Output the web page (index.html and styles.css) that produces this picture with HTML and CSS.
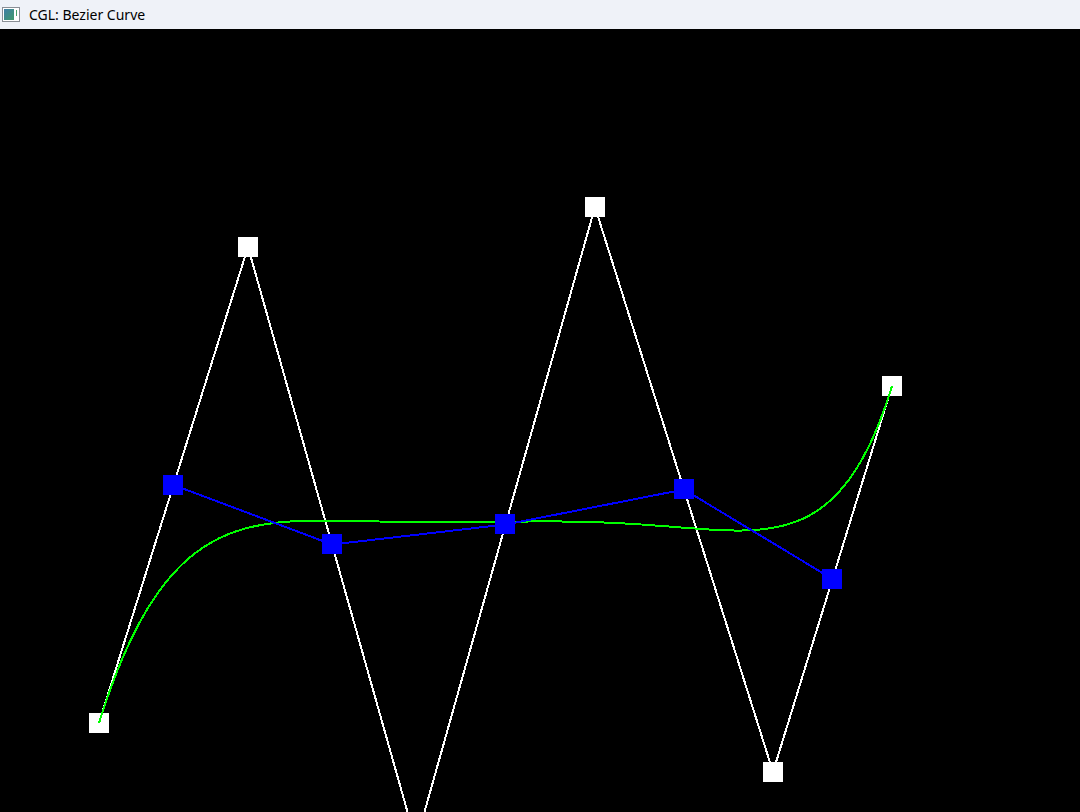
FILE: index.html
```html
<!DOCTYPE html>
<html lang="en">
<head>
    <meta charset="UTF-8">
    <title>CGL: Bezier Curve</title>
    <link rel="stylesheet" href="styles.css">
</head>
<body>
    <div class="titlebar">
        <svg class="app-icon" width="18" height="15" viewBox="0 0 18 15">
            <defs>
                <linearGradient id="iconFill" x1="0" y1="0" x2="1" y2="1">
                    <stop offset="0" stop-color="#3f7fa8"/>
                    <stop offset="1" stop-color="#3f9a6a"/>
                </linearGradient>
            </defs>
            <rect x="0.5" y="0.5" width="17" height="14" fill="#fff" stroke="#8a8f96"/>
            <rect x="2" y="2" width="10" height="11" fill="url(#iconFill)"/>
            <rect x="14" y="3" width="1" height="6" fill="#4aa36a"/>
        </svg>
        <span class="title">CGL: Bezier Curve</span>
    </div>
    <svg id="view" class="view" width="1080" height="783" viewBox="0 29 1080 783"></svg>
    <script src="script.js"></script>
</body>
</html>
```

FILE: styles.css
```css
html, body { margin: 0; padding: 0; background: #000; overflow: hidden; }
.titlebar {
    height: 29px;
    background: #eff2f8;
    display: flex;
    align-items: center;
    padding-left: 2px;
    gap: 9px;
    font-family: "Noto Sans", "Open Sans", sans-serif;
    font-size: 14px;
    color: #000;
}
.app-icon { display: block; margin-top: -1px; }
.title { line-height: 1; }
.view { display: block; background: #000; }
.view line, .view polyline { shape-rendering: crispEdges; fill: none; stroke-width: 2; }
.view rect { shape-rendering: crispEdges; }
.poly { stroke: #fff; }
.mid { stroke: #0000ff; }
.curve { stroke: #00ff00; }
.pt-white { fill: #fff; }
.pt-blue { fill: #0000ff; }
```

FILE: script.js
```js
// control points, screen coordinates
const pts = [[99, 723], [248, 247], [416, 842], [595, 207], [773, 772], [892, 386]];
const view = document.getElementById("view");
const NS = "http://www.w3.org/2000/svg";

function el(name, attrs) {
    const e = document.createElementNS(NS, name);
    for (const k in attrs) e.setAttribute(k, attrs[k]);
    view.appendChild(e);
    return e;
}

// 20x20 point marker, snapped to whole pixels
function square(p, cls) {
    el("rect", { x: Math.floor(p[0]) - 10, y: Math.floor(p[1]) - 10, width: 20, height: 20, class: cls });
}

// midpoints between neighbouring control points
const mids = [];
for (let i = 0; i < pts.length - 1; i++) {
    mids.push([(pts[i][0] + pts[i + 1][0]) / 2, (pts[i][1] + pts[i + 1][1]) / 2]);
}

// de Casteljau
function bezier(t) {
    let p = pts.map(q => q.slice());
    for (let k = p.length - 1; k > 0; k--) {
        for (let i = 0; i < k; i++) {
            p[i] = [p[i][0] * (1 - t) + p[i + 1][0] * t, p[i][1] * (1 - t) + p[i + 1][1] * t];
        }
    }
    return p[0];
}

el("polyline", { points: pts.map(p => p.join(",")).join(" "), class: "poly" });
pts.forEach(p => square(p, "pt-white"));

const curve = [];
for (let i = 0; i <= 200; i++) curve.push(bezier(i / 200).map(v => v.toFixed(1)).join(","));
el("polyline", { points: curve.join(" "), class: "curve" });

el("polyline", { points: mids.map(p => p.join(",")).join(" "), class: "mid" });
mids.forEach(p => square(p, "pt-blue"));
```
